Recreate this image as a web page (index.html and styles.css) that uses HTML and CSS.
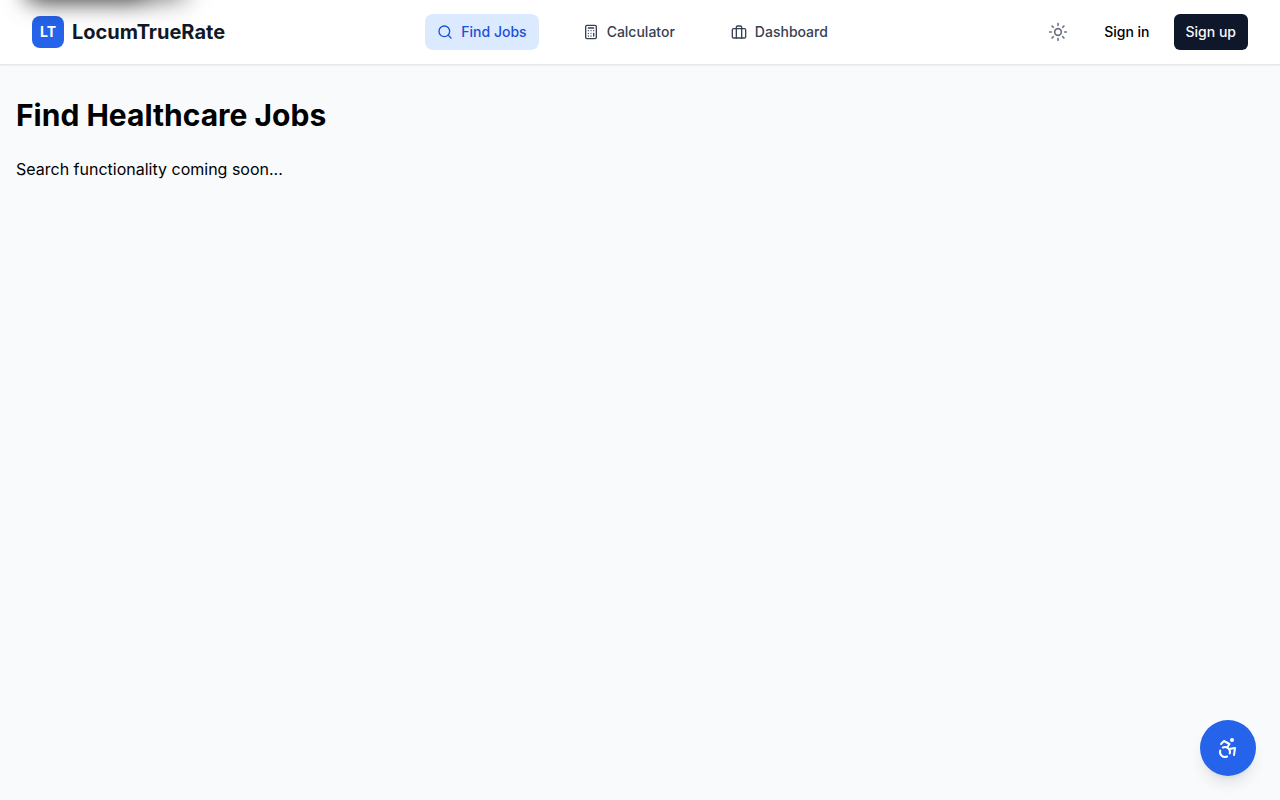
FILE: index.html
```html
<!DOCTYPE html>
<html lang="en">
<head>
<meta charset="utf-8">
<meta name="viewport" content="width=device-width, initial-scale=1">
<title>LocumTrueRate</title>
<link rel="stylesheet" href="styles.css">
</head>
<body>
<header class="header">
  <a class="brand" href="#"><span class="brand-mark">LT</span><span class="brand-name">LocumTrueRate</span></a>
  <nav class="nav">
    <a class="nav-link active" href="#">
      <svg class="icon" viewBox="0 0 24 24"><circle cx="11" cy="11" r="8"/><path d="m21 21-4.3-4.3"/></svg>
      Find Jobs</a>
    <a class="nav-link" href="#">
      <svg class="icon" viewBox="0 0 24 24"><rect width="16" height="20" x="4" y="2" rx="2"/><path d="M8 6h8M16 14v4M16 10h.01M12 10h.01M8 10h.01M12 14h.01M8 14h.01M12 18h.01M8 18h.01"/></svg>
      Calculator</a>
    <a class="nav-link" href="#">
      <svg class="icon" viewBox="0 0 24 24"><rect width="20" height="14" x="2" y="7" rx="2"/><path d="M16 21V5a2 2 0 0 0-2-2h-4a2 2 0 0 0-2 2v16"/></svg>
      Dashboard</a>
  </nav>
  <div class="actions">
    <button class="theme" type="button" aria-label="Theme">
      <svg class="icon icon-md" viewBox="0 0 24 24"><circle cx="12" cy="12" r="4"/><path d="M12 2v2M12 20v2M4.93 4.93l1.41 1.41M17.66 17.66l1.41 1.41M2 12h2M20 12h2M6.34 17.66l-1.41 1.41M19.07 4.93l-1.41 1.41"/></svg>
    </button>
    <div class="account">
      <button class="btn" type="button">Sign in</button>
      <button class="btn btn-dark" type="button">Sign up</button>
    </div>
  </div>
</header>
<main class="content">
  <h1 class="title">Find Healthcare Jobs</h1>
  <p class="text">Search functionality coming soon...</p>
</main>
<div class="shade shade-short" aria-hidden="true"></div>
<div class="shade shade-long" aria-hidden="true"></div>
<button class="access" type="button" aria-label="Accessibility">
  <svg class="icon icon-lg" viewBox="0 0 24 24"><circle cx="16" cy="4" r="1"/><path d="m18 19 1-7-6 1"/><path d="m5 8 3-3 5.5 3-2.36 3.5"/><path d="M4.24 14.5a5 5 0 0 0 6.88 6"/><path d="M13.76 17.5a5 5 0 0 0-6.88-6"/></svg>
</button>
</body>
</html>
```

FILE: styles.css
```css
* { box-sizing: border-box; }
body {
  margin: 0;
  min-height: 100vh;
  background: #f8fafc;
  color: #000;
  font-family: Inter, "Liberation Sans", sans-serif;
  font-size: 16px;
  line-height: 24px;
}
a { color: inherit; text-decoration: none; }
button { font: inherit; border: 0; background: none; cursor: pointer; }
.icon {
  width: 16px;
  height: 16px;
  flex: none;
  fill: none;
  stroke: currentColor;
  stroke-width: 2;
  stroke-linecap: round;
  stroke-linejoin: round;
}
.icon-md { width: 20px; height: 20px; }
.icon-lg { width: 24px; height: 24px; }
.header {
  display: flex;
  align-items: center;
  justify-content: space-between;
  min-height: 65px;
  padding: 0 32px;
  background: #fff;
  border-bottom: 1px solid #e5e7eb;
  box-shadow: 0 1px 2px rgba(0, 0, 0, 0.05);
}
.brand { display: flex; align-items: center; gap: 8px; color: #111827; }
.brand-mark {
  display: grid;
  place-items: center;
  width: 32px;
  height: 32px;
  border-radius: 8px;
  background: #2563eb;
  color: #fff;
  font-size: 14px;
  font-weight: 700;
}
.brand-name { font-size: 20px; line-height: 28px; font-weight: 700; }
.nav { display: flex; gap: 32px; }
.nav-link {
  display: flex;
  align-items: center;
  gap: 8px;
  padding: 8px 12px;
  border-radius: 8px;
  color: #374151;
  font-size: 14px;
  line-height: 20px;
  font-weight: 500;
}
.active { background: #dbeafe; color: #1d4ed8; }
.actions { display: flex; align-items: center; gap: 16px; }
.theme { display: flex; padding: 8px; color: #6b7280; }
.account { display: flex; gap: 12px; }
.btn {
  padding: 8px 12px;
  border-radius: 6px;
  font-size: 14px;
  line-height: 20px;
  font-weight: 500;
}
.btn-dark { background: #0f172a; color: #f8fafc; }
.content { padding: 32px 16px; }
.title { margin: 0 0 24px; font-size: 30px; line-height: 36px; font-weight: 700; }
.text { margin: 0; }
.shade {
  position: absolute;
  top: -44px;
  left: 28px;
  height: 40px;
  border-radius: 6px;
  box-shadow: 0 4px 24px rgba(0, 0, 0, 0.5);
}
.shade-short { width: 118px; }
.shade-long { width: 158px; }
.access {
  position: fixed;
  right: 24px;
  bottom: 24px;
  display: grid;
  place-items: center;
  width: 56px;
  height: 56px;
  padding: 0;
  border-radius: 50%;
  background: #2563eb;
  color: #fff;
  box-shadow: 0 10px 15px -3px rgba(0, 0, 0, 0.1), 0 4px 6px -4px rgba(0, 0, 0, 0.1);
}
```
